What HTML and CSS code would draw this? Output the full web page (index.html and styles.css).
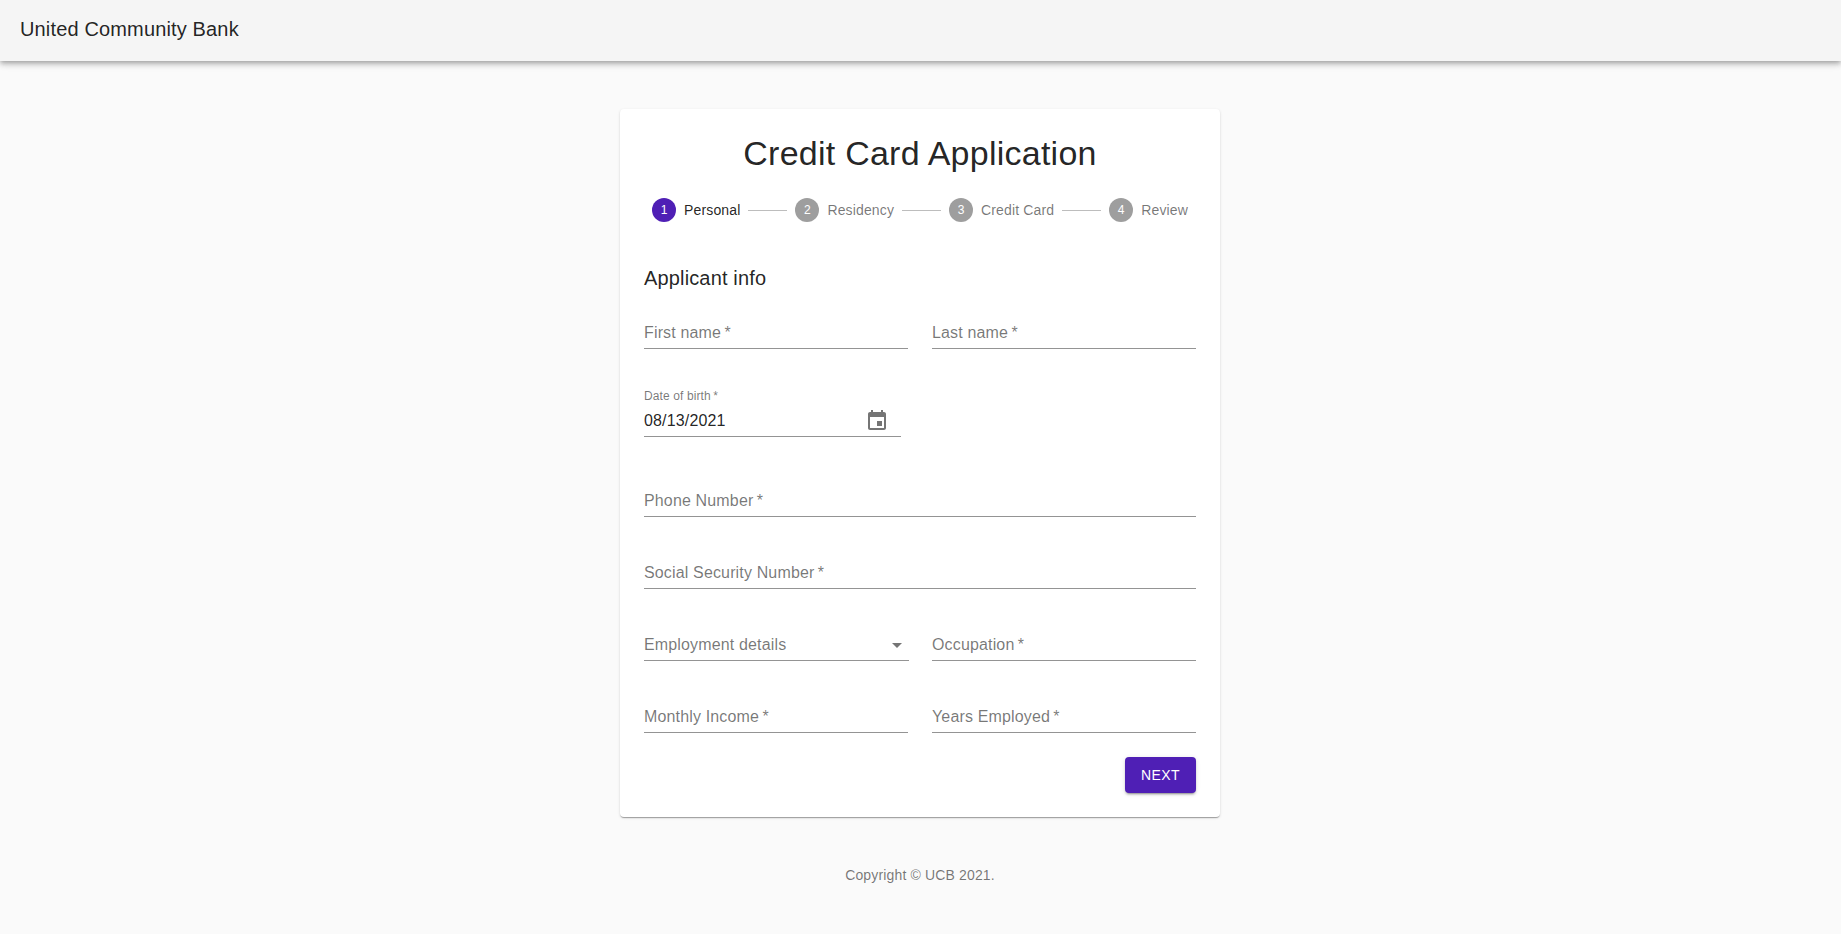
FILE: index.html
```html
<!DOCTYPE html>
<html lang="en">
<head>
<meta charset="utf-8">
<title>Credit Card Application</title>
<link rel="stylesheet" href="styles.css">
</head>
<body>
<header class="app-bar"><h6 class="brand">United Community Bank</h6></header>
<main class="layout">
  <section class="paper">
    <h1 class="title">Credit Card Application</h1>
    <div class="stepper">
      <div class="step active"><span class="num">1</span><span class="step-label">Personal</span></div>
      <span class="connector"></span>
      <div class="step"><span class="num">2</span><span class="step-label">Residency</span></div>
      <span class="connector"></span>
      <div class="step"><span class="num">3</span><span class="step-label">Credit Card</span></div>
      <span class="connector"></span>
      <div class="step"><span class="num">4</span><span class="step-label">Review</span></div>
    </div>
    <h2 class="subtitle">Applicant info</h2>
    <form class="grid">
      <div class="field">First name&#8201;*</div>
      <div class="field">Last name&#8201;*</div>
      <div class="date">
        <label class="date-label">Date of birth&#8201;*</label>
        <div class="date-control"><span class="date-value">08/13/2021</span>
          <svg class="calendar" viewBox="0 0 24 24"><path d="M17 12h-5v5h5v-5zM16 1v2H8V1H6v2H5c-1.110 0-1.990.9-1.990 2L3 19c0 1.100.89 2 2 2h14c1.100 0 2-.9 2-2V5c0-1.100-.9-2-2-2h-1V1h-2zm3 18H5V8h14v11z"/></svg>
        </div>
      </div>
      <div class="field wide">Phone Number&#8201;*</div>
      <div class="field wide">Social Security Number&#8201;*</div>
      <div class="field select">Employment details<svg class="arrow" viewBox="0 0 24 24"><path d="M7 10l5 5 5-5z"/></svg></div>
      <div class="field">Occupation&#8201;*</div>
      <div class="field">Monthly Income&#8201;*</div>
      <div class="field">Years Employed&#8201;*</div>
    </form>
    <div class="actions"><button class="next" type="button">Next</button></div>
  </section>
  <footer class="copyright">Copyright © UCB 2021.</footer>
</main>
</body>
</html>
```
FILE: styles.css
```css
* { box-sizing: border-box; }
body {
  margin: 0;
  background: #fafafa;
  color: rgba(0, 0, 0, 0.87);
  font-family: "Liberation Sans", Arial, sans-serif;
}
.app-bar {
  display: flex;
  height: 61px;
  padding: 13px 20px;
  background: #f5f5f5;
  box-shadow: 0 2px 4px -1px rgba(0,0,0,.2), 0 4px 5px rgba(0,0,0,.14), 0 1px 10px rgba(0,0,0,.12);
}
.brand { margin: 0; font-size: 20px; line-height: 32px; font-weight: 500; letter-spacing: .15px; }
.layout { width: 600px; margin: 48px 0 0 calc(50% - 300.5px); }
.paper {
  padding: 24px;
  background: #fff;
  border-radius: 4px;
  box-shadow: 0 2px 1px -1px rgba(0,0,0,.2), 0 1px 1px rgba(0,0,0,.14), 0 1px 3px rgba(0,0,0,.12);
}
.title { margin: 0; text-align: center; font-size: 34px; line-height: 40px; font-weight: 400; letter-spacing: .25px; }
.stepper { display: flex; align-items: center; padding: 25px 0 40px; }
.step { display: flex; align-items: center; padding: 0 8px; gap: 8px; font-size: 14px; line-height: 20px; letter-spacing: .15px; color: rgba(0,0,0,.54); }
.num { display: grid; place-items: center; width: 24px; height: 24px; border-radius: 50%; background: #9e9e9e; color: #fff; font-size: 12px; letter-spacing: 0; }
.active { color: rgba(0,0,0,.87); }
.active .num { background: #4f1fb5; }
.connector { flex: 1; margin-top: 1px; border-top: 1px solid #bdbdbd; }
.subtitle { margin: 0 0 7px; font-size: 20px; line-height: 32px; font-weight: 500; letter-spacing: .15px; }
.grid { display: grid; grid-template-columns: 264px 264px; gap: 24px; }
.field {
  display: flex;
  align-items: center;
  justify-content: space-between;
  height: 48px;
  padding-top: 16px;
  border-bottom: 1px solid #949494;
  color: rgba(0,0,0,.54);
  font-size: 16px;
  line-height: 19px;
  letter-spacing: .15px;
}
.wide { grid-column: 1 / -1; }
.select { width: 265px; }
.date { grid-column: 1 / -1; width: 257px; height: 72px; padding-top: 15px; }
.date-label { display: block; font-size: 12px; line-height: 16px; color: rgba(0,0,0,.54); letter-spacing: .11px; }
.date-control { display: flex; align-items: center; justify-content: space-between; height: 33px; padding: 2px 12px 0 0; border-bottom: 1px solid #949494; }
.date-value { font-size: 16px; line-height: 20px; letter-spacing: .15px; }
.calendar { width: 24px; height: 24px; fill: rgba(0,0,0,.54); }
.arrow { width: 24px; height: 24px; fill: rgba(0,0,0,.54); }
.actions { display: flex; justify-content: flex-end; margin-top: 24px; }
.next {
  height: 36px;
  padding: 6px 16px;
  border: 0;
  border-radius: 4px;
  background: #4f1fb5;
  color: #fff;
  font: 500 14px/24px "Liberation Sans", Arial, sans-serif;
  letter-spacing: .4px;
  text-transform: uppercase;
  box-shadow: 0 3px 1px -2px rgba(0,0,0,.2), 0 2px 2px rgba(0,0,0,.14), 0 1px 5px rgba(0,0,0,.12);
}
.copyright { margin-top: 48px; text-align: center; font-size: 14px; line-height: 20px; letter-spacing: .15px; color: rgba(0,0,0,.54); }
```
